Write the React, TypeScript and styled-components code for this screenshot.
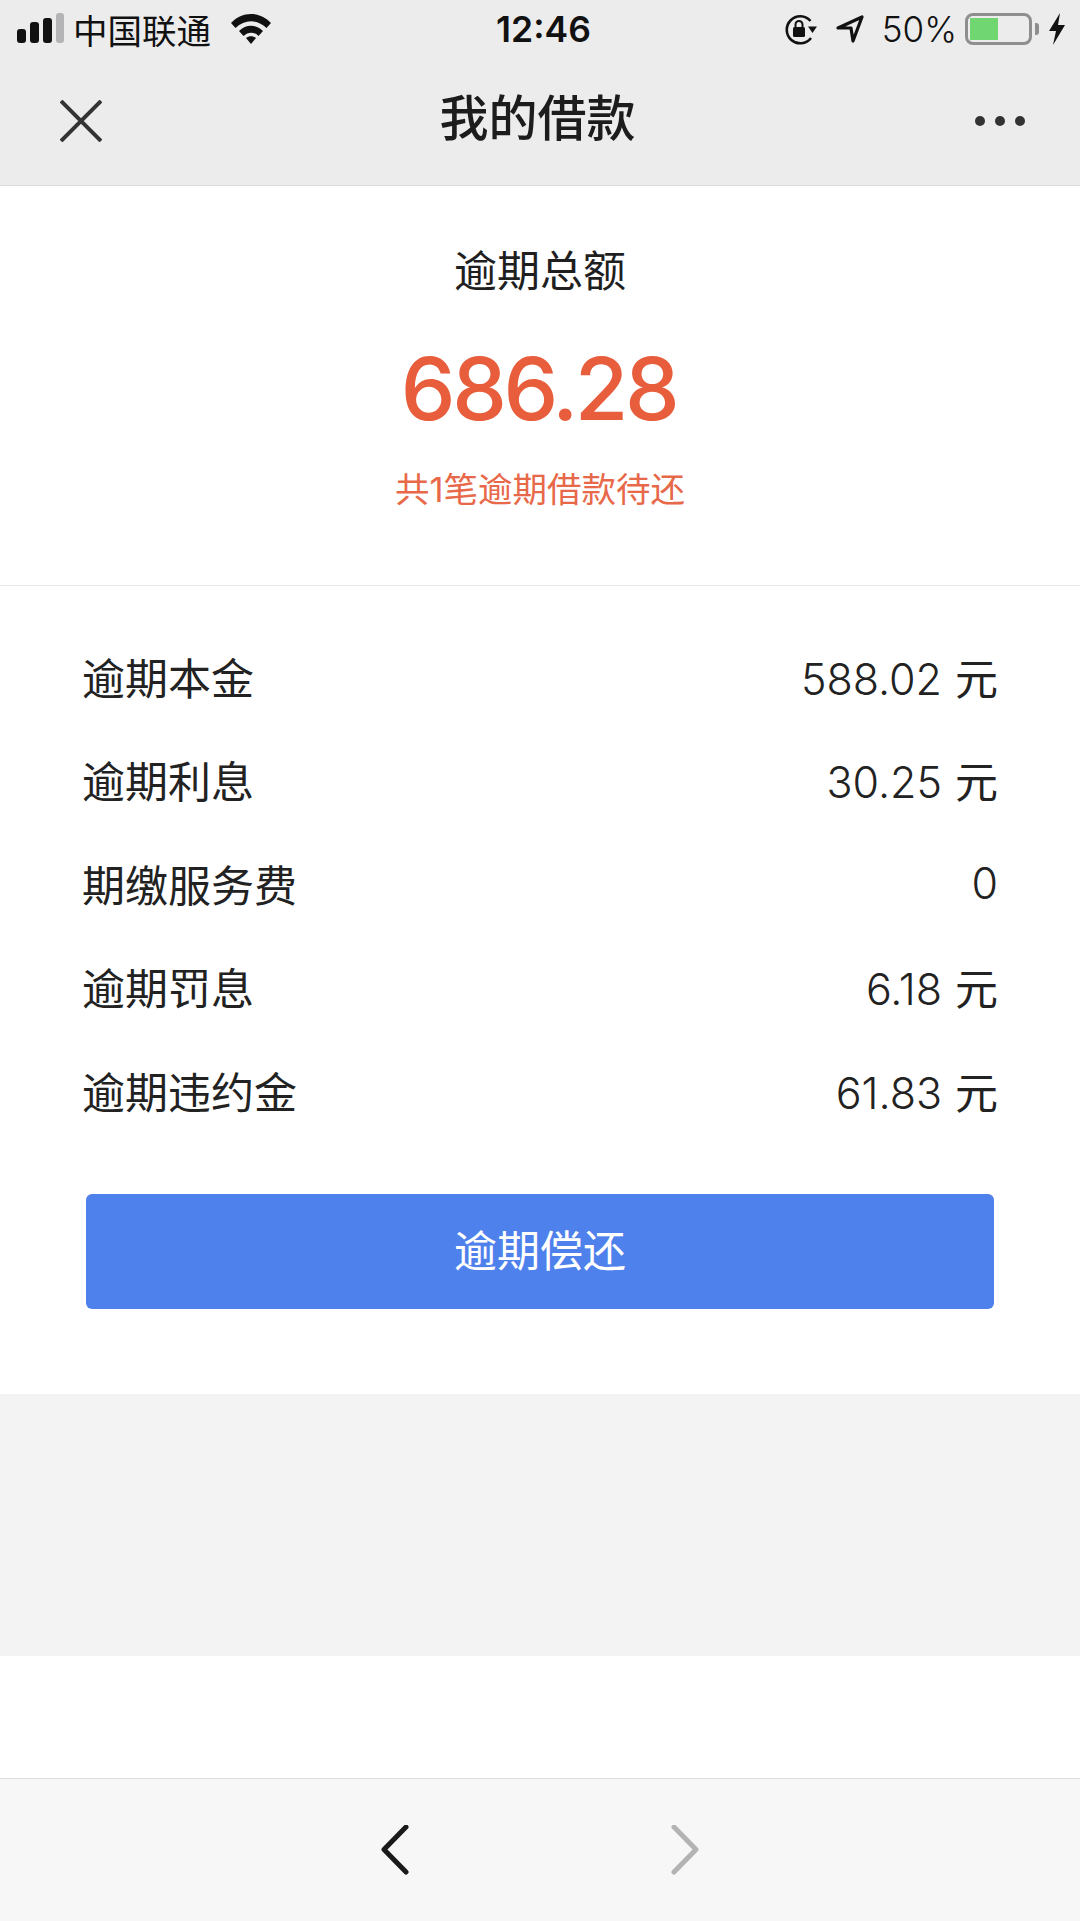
import React from "react";
import styled, { createGlobalStyle } from "styled-components";

const CJK = `Inter, "Noto Sans CJK SC", sans-serif`;

const rows = [
  { label: "逾期本金", value: "588.02", unit: "元" },
  { label: "逾期利息", value: "30.25", unit: "元" },
  { label: "期缴服务费", value: "0", unit: "" },
  { label: "逾期罚息", value: "6.18", unit: "元" },
  { label: "逾期违约金", value: "61.83", unit: "元" },
];

export default function App() {
  return (
    <Page>
      <GlobalStyle />
      <Header>
        <StatusBar>
          <StatusLeft>
            <svg width="48" height="32" viewBox="0 0 48 32">
              <rect x="0" y="16" width="9" height="14" rx="3" fill="#111" />
              <rect x="13" y="9" width="9" height="21" rx="3" fill="#111" />
              <rect x="26" y="5" width="9" height="25" rx="3" fill="#111" />
              <rect x="39" y="0" width="8" height="30" rx="3" fill="#b4b4b6" />
            </svg>
            <Carrier>中国联通</Carrier>
            <svg width="42" height="32" viewBox="0 0 42 32">
              <path d="M1 10 C12 -2 30 -2 41 10 L36.500 15 C27 6 15 6 5.500 15 Z" fill="#111" />
              <path d="M9 18 C16 11 26 11 33 18 L28.500 23 C24 18.500 18 18.500 13.500 23 Z" fill="#111" />
              <path d="M16 25 C19 22.500 23 22.500 26 25 L21 31 Z" fill="#111" />
            </svg>
          </StatusLeft>
          <Clock>12:46</Clock>
          <StatusRight>
            <svg width="34" height="32" viewBox="0 0 34 32">
              <path d="M26.500 8 A13.500 13.500 0 1 0 27 25" fill="none" stroke="#111" strokeWidth="2.600" />
              <path d="M24 13.500 L33 13.500 L28.500 20 Z" fill="#111" />
              <rect x="9" y="14" width="12" height="10" rx="1.500" fill="#111" />
              <path d="M11.500 14 V11.500 A3.500 3.500 0 0 1 18.500 11.500 V14" fill="none" stroke="#111" strokeWidth="2" />
            </svg>
            <LocationIcon width="28" height="30" viewBox="0 0 28 30">
              <path d="M2 14 L26 3 L17 27 L15 14 Z" fill="none" stroke="#111" strokeWidth="3.200" strokeLinejoin="round" />
            </LocationIcon>
            <Percent>50%</Percent>
            <Battery>
              <BatteryFill />
            </Battery>
            <BatteryCap />
            <svg width="18" height="32" viewBox="0 0 18 32">
              <path d="M12 0 L1 18 L8 18 L5 32 L17 12 L10 12 Z" fill="#111" />
            </svg>
          </StatusRight>
        </StatusBar>
        <NavBar>
          <svg width="42" height="42" viewBox="0 0 42 42">
            <path d="M1 1 L41 41 M41 1 L1 41" stroke="#333" strokeWidth="4" />
          </svg>
          <NavTitle>我的借款</NavTitle>
          <Dots>
            <Dot />
            <Dot />
            <Dot />
          </Dots>
        </NavBar>
      </Header>

      <Summary>
        <SummaryLabel>逾期总额</SummaryLabel>
        <Amount>686.28</Amount>
        <SummaryNote>共1笔逾期借款待还</SummaryNote>
      </Summary>

      <Details>
        {rows.map((row) => (
          <Row key={row.label}>
            <span>{row.label}</span>
            <span>
              <Value>{row.value}</Value>
              {row.unit && <Unit>{row.unit}</Unit>}
            </span>
          </Row>
        ))}
        <RepayButton>逾期偿还</RepayButton>
      </Details>

      <GrayBand />
      <WhiteBand />

      <BottomBar>
        <svg width="28" height="50" viewBox="0 0 28 50">
          <path d="M25 2 L3 24.500 L25 47" fill="none" stroke="#1a1a1a" strokeWidth="5" strokeLinecap="round" strokeLinejoin="round" />
        </svg>
        <svg width="28" height="50" viewBox="0 0 28 50">
          <path d="M3 2 L25 24.500 L3 47" fill="none" stroke="#b3b3b3" strokeWidth="5" strokeLinecap="round" strokeLinejoin="round" />
        </svg>
      </BottomBar>
    </Page>
  );
}

const GlobalStyle = createGlobalStyle`
  html, body {
    margin: 0;
    padding: 0;
    background: #fff;
  }
`;

const Page = styled.div`
  width: 1080px;
  height: 1921px;
  display: flex;
  flex-direction: column;
  overflow: hidden;
  font-family: ${CJK};
  color: #1f1f1f;
`;

const Header = styled.header`
  height: 185px;
  flex: none;
  background: #ececed;
  border-bottom: 1px solid #dcdcdc;
`;

const StatusBar = styled.div`
  height: 58px;
  padding: 0 14px 0 17px;
  display: grid;
  grid-template-columns: 1fr auto 1fr;
  align-items: center;
  color: #111;
`;

const StatusLeft = styled.div`
  display: flex;
  align-items: center;
  gap: 8px;
`;

const Carrier = styled.span`
  font-size: 34.500px;
  margin-right: 11px;
`;

const Clock = styled.span`
  font-size: 35.500px;
  font-weight: 600;
  position: relative;
  left: 2px;
`;

const StatusRight = styled.div`
  display: flex;
  align-items: center;
  justify-content: flex-end;
`;

const LocationIcon = styled.svg`
  margin-left: 18px;
`;

const Percent = styled.span`
  font-size: 35px;
  font-weight: 350;
  margin-left: 18px;
  margin-right: 8px;
`;

const Battery = styled.div`
  box-sizing: border-box;
  width: 67px;
  height: 32px;
  border: 3px solid #8e8e90;
  border-radius: 8px;
  padding: 2px;
`;

const BatteryFill = styled.div`
  width: 28px;
  height: 100%;
  background: #6fd672;
`;

const BatteryCap = styled.div`
  width: 4px;
  height: 12px;
  margin: 0 9px 0 3px;
  background: #8e8e90;
  border-radius: 0 3px 3px 0;
`;

const NavBar = styled.div`
  height: 126px;
  padding: 0 55px 0 60px;
  display: flex;
  align-items: center;
  justify-content: space-between;
  position: relative;
`;

const NavTitle = styled.h1`
  margin: 0;
  font-size: 49px;
  font-weight: 500;
  line-height: 60px;
  color: #1c1c1c;
  position: relative;
  left: -1px;
  top: -2px;
`;

const Dots = styled.div`
  display: flex;
  gap: 10px;
`;

const Dot = styled.span`
  width: 10px;
  height: 10px;
  border-radius: 50%;
  background: #333;
`;

const Summary = styled.section`
  height: 400px;
  flex: none;
  box-sizing: border-box;
  border-bottom: 1px solid #e6e6e6;
  display: flex;
  flex-direction: column;
  align-items: center;
  padding-top: 55px;
`;

const SummaryLabel = styled.div`
  font-size: 43px;
  line-height: 60px;
`;

const Amount = styled.div`
  font-size: 87px;
  font-weight: 520;
  line-height: 100px;
  letter-spacing: -3.500px;
  margin: 38px 3px 0 0;
  color: #e85d3c;
`;

const SummaryNote = styled.div`
  font-size: 34.500px;
  line-height: 48px;
  margin-top: 27px;
  color: #e8694a;
`;

const Details = styled.section`
  height: 808px;
  flex: none;
  box-sizing: border-box;
  padding: 38px 82px 0;
`;

const Row = styled.div`
  height: 103.500px;
  display: flex;
  align-items: center;
  justify-content: space-between;
  font-size: 43px;
  color: #222;
`;

const Value = styled.span`
  font-weight: 350;
`;

const Unit = styled.span`
  margin-left: 13px;
`;

const RepayButton = styled.button`
  display: block;
  width: 908px;
  height: 115px;
  margin: 52px 0 0 4px;
  padding: 0 0 6px;
  border: none;
  border-radius: 6px;
  background: #4f81ec;
  color: #fff;
  font-family: inherit;
  font-size: 43px;
`;

const GrayBand = styled.div`
  height: 262px;
  flex: none;
  background: #f3f3f4;
`;

const WhiteBand = styled.div`
  height: 122px;
  flex: none;
`;

const BottomBar = styled.footer`
  flex: 1;
  background: #f7f7f7;
  border-top: 1px solid #dfdfdf;
  display: flex;
  align-items: center;
  justify-content: center;
  gap: 262px;
`;
